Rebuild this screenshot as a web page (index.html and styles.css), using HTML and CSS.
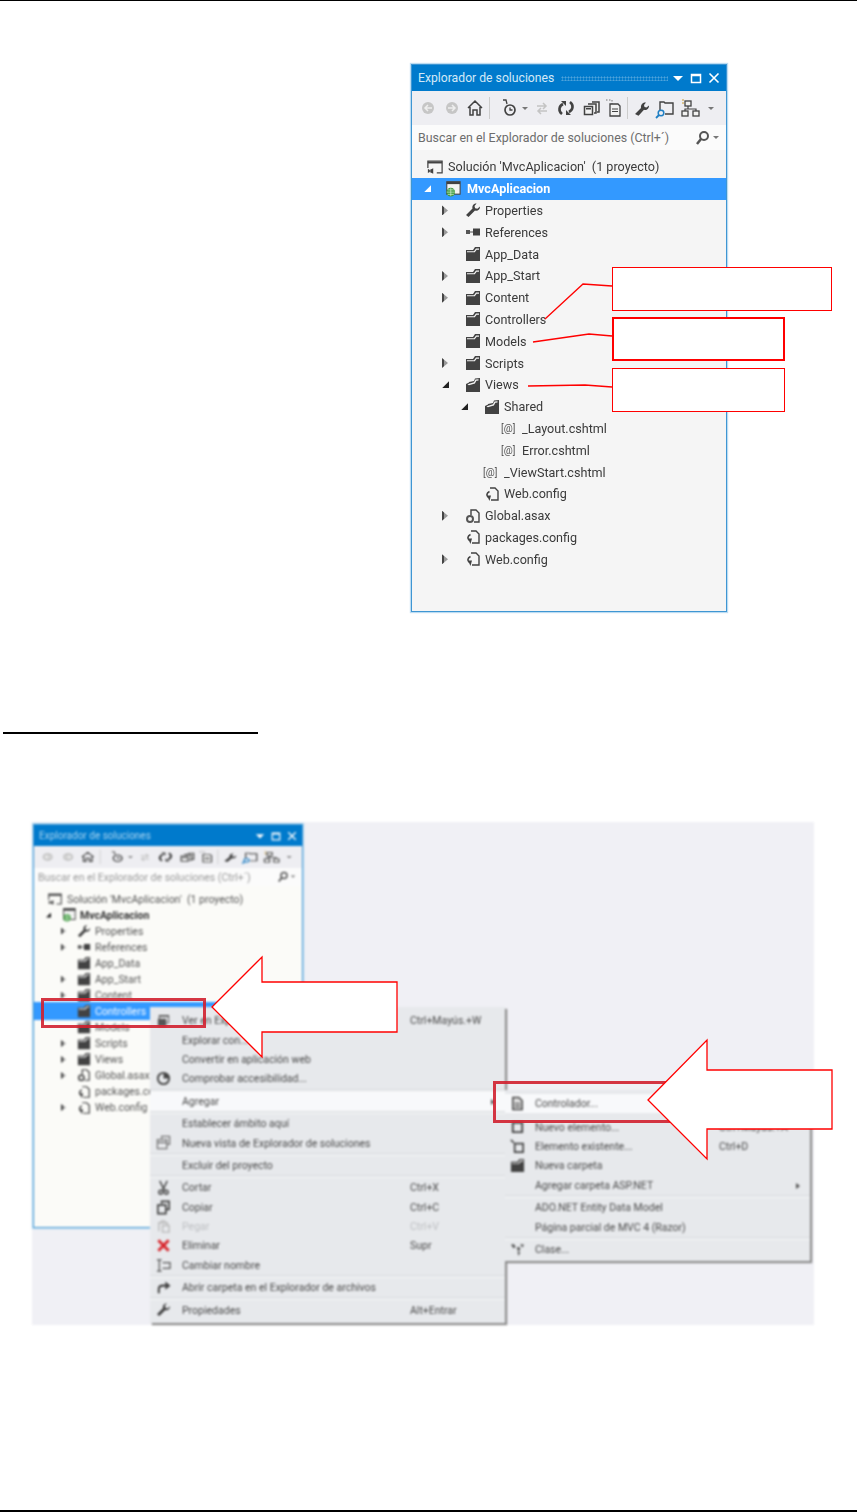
FILE: index.html
```html
<!DOCTYPE html>
<html lang="es">
<head>
  <meta charset="UTF-8" />
  <title>Explorador de soluciones</title>
  <link rel="stylesheet" href="styles.css">
</head>
<body>

  <svg class="defs" width="0" height="0">
    <symbol id="i-folder" viewBox="0 0 16 16">
      <path fill="#424242" d="M1 4h7l2-3h5v14H1z"/>
      <path fill="#f4f4f4" d="M2 5.2h7l2-2.7h3v1.200h-2.400l-1.800 2.500H2z"/>
    </symbol>
    <symbol id="i-folder-open" viewBox="0 0 16 16">
      <path fill="#424242" d="M1 15V7l3-1.500V5l5-1 1-2.500 5-.5v14z"/>
      <path fill="#f4f4f4" d="M2.500 7.300l6.500-2 1.500-2.800 3-.3v1.200l-2.200.3-1.400 2.800-6 1.700z"/>
    </symbol>
    <symbol id="i-wrench" viewBox="0 0 16 16">
      <path fill="#424242" d="M1 13l6.500-6.500C6.800 4 8.500 1.200 11.600 1.500L9.500 4l.6 2.200 2.300.6L15 4.500c.3 3-2.500 4.900-5 4L3.500 15z"/>
    </symbol>
    <symbol id="i-refs" viewBox="0 0 16 16">
      <rect x="1" y="6" width="4" height="4" fill="#555"/>
      <rect x="5" y="7.500" width="3" height="1" fill="#555"/>
      <rect x="8" y="4.500" width="7" height="7" fill="#424242"/>
    </symbol>
    <symbol id="i-config" viewBox="0 0 16 16">
      <path fill="none" stroke="#424242" stroke-width="1.400" d="M6 2h5l3 3v9H7"/>
      <path fill="none" stroke="#424242" stroke-width="1.600" d="M5.500 5.500C2.500 7 2 10 4.500 11.500"/>
      <path fill="#424242" d="M3 9.500h4L5.500 15z"/>
    </symbol>
    <symbol id="i-global" viewBox="0 0 16 16">
      <path fill="none" stroke="#424242" stroke-width="1.400" d="M6 7V2h5l3 3v9H9"/>
      <circle cx="5" cy="11" r="3" fill="none" stroke="#555" stroke-width="2"/>
    </symbol>
    <symbol id="i-solution" viewBox="0 0 18 16">
      <path fill="none" stroke="#424242" stroke-width="1.400" d="M1 9V1.500h16v13h-6"/>
      <rect x="1" y="2" width="16" height="2" fill="#424242"/>
      <path fill="#424242" d="M1 10l2 1.500L7 9.500v6l-4-2-2 1.300zM3 12v1.200l1.800-.6z"/>
    </symbol>
    <symbol id="i-project" viewBox="0 0 18 18">
      <rect x="2" y=".8" width="15" height="14" fill="#f4f4f4" stroke="#424242" stroke-width="1.200"/>
      <rect x="2" y="1" width="15" height="2.500" fill="#424242"/>
      <circle cx="6.500" cy="12.500" r="4.800" fill="#3d9a3d"/>
      <path fill="none" stroke="#d6efd6" stroke-width=".8" d="M2 12.500h9M6.500 8v9M3 10h7M3 15h7"/>
    </symbol>
    <symbol id="i-explorer" viewBox="0 0 16 16">
      <path fill="#555" d="M3 2h11v9h-3v3H2V6h1zM4 6h7v4h2V4H4z"/>
    </symbol>
    <symbol id="i-pie" viewBox="0 0 16 16">
      <circle cx="8" cy="8" r="6" fill="none" stroke="#444" stroke-width="2"/>
      <path fill="#444" d="M8 8V2a6 6 0 0 1 6 6z"/>
    </symbol>
    <symbol id="i-stack" viewBox="0 0 16 16">
      <path fill="none" stroke="#777" stroke-width="1.400" d="M6 4V1.500h8.500V10H12M1.500 5h10v9.500h-10zM1.500 8h10"/>
    </symbol>
    <symbol id="i-cut" viewBox="0 0 16 16">
      <path fill="none" stroke="#444" stroke-width="1.500" d="M4 1l5 10M12 1L7 11"/>
      <circle cx="5" cy="13" r="2" fill="none" stroke="#444" stroke-width="1.500"/>
      <circle cx="11" cy="13" r="2" fill="none" stroke="#444" stroke-width="1.500"/>
    </symbol>
    <symbol id="i-copy" viewBox="0 0 16 16">
      <path fill="none" stroke="#444" stroke-width="1.800" d="M6 4V1.500h8V10h-3M2 5.500h8.500v9H2z"/>
    </symbol>
    <symbol id="i-paste" viewBox="0 0 16 16">
      <path fill="none" stroke="#bbb" stroke-width="1.500" d="M3 13V4h9v2M7 7h7v7H7zM5 4l1-2h3l1 2"/>
    </symbol>
    <symbol id="i-delete" viewBox="0 0 16 16">
      <path fill="none" stroke="#d8262c" stroke-width="3" d="M2.500 2.500l11 11M13.500 2.500l-11 11"/>
    </symbol>
    <symbol id="i-rename" viewBox="0 0 16 16">
      <path fill="none" stroke="#555" stroke-width="1.300" d="M1 2h2.500M1 14h2.500M6 2H3.500v12H6M7 5h8v6H7"/>
    </symbol>
    <symbol id="i-redo" viewBox="0 0 16 16">
      <path fill="none" stroke="#444" stroke-width="2.200" d="M3 14V9.500C3 7 5 6 7.500 6H11"/>
      <path fill="#444" d="M10 1.500L15.500 6 10 10.500z"/>
    </symbol>
    <symbol id="i-file" viewBox="0 0 16 16">
      <path fill="#ddd" stroke="#444" stroke-width="1.600" d="M3 1.500h6.500l3.500 3.500v9.500H3z"/>
      <path stroke="#444" stroke-width="1.200" d="M5 8h6M5 11h6"/>
    </symbol>
    <symbol id="i-new" viewBox="0 0 16 16">
      <path fill="none" stroke="#444" stroke-width="2" d="M3 4h10v10H3z"/>
    </symbol>
    <symbol id="i-existing" viewBox="0 0 16 16">
      <path fill="none" stroke="#444" stroke-width="1.800" d="M5 5h9v9H5zM1 1l3 3"/>
    </symbol>
    <symbol id="i-class" viewBox="0 0 16 16">
      <path fill="#555" d="M1 3l3-1 2 3-2 2zM7 6l3-1 1 3-2 2zM11 2l4 1-2 3zM8 10l3 1-2 4z"/>
    </symbol>
    <symbol id="i-toolbar" viewBox="0 0 314 34" preserveAspectRatio="none">
      <circle cx="16" cy="17" r="6" fill="#c6c6c6"/>
      <path stroke="#eee" stroke-width="1.500" fill="none" d="M20 17h-7M16 14l-3 3 3 3"/>
      <circle cx="40" cy="17" r="6" fill="#c6c6c6"/>
      <path stroke="#eee" stroke-width="1.500" fill="none" d="M36 17h7M40 14l3 3-3 3"/>
      <path fill="none" stroke="#424242" stroke-width="1.500" d="M56 17l7-7 7 7M58 16v8h3v-5h4v5h3v-8"/>
      <rect x="77" y="6" width="1" height="22" fill="#ccc"/>
      <circle cx="98" cy="19" r="5" fill="none" stroke="#424242" stroke-width="1.700"/>
      <path fill="none" stroke="#424242" stroke-width="1.300" d="M98 16.500V19h2.500M91 9h3l1 4"/>
      <path fill="#777" d="M110 16h6l-3 3z"/>
      <path fill="none" stroke="#c4c4c4" stroke-width="1.500" d="M125 15h9M131 12l3 3-3 3M135 20h-9M129 17l-3 3 3 3"/>
      <path fill="none" stroke="#424242" stroke-width="2.600" d="M150 23c-4-3-3-8 1-10M158 11c4 3 3 8-1 10"/>
      <path fill="#424242" d="M149 10h5v5zM159 24h-5v-5z"/>
      <path fill="#f2f2f2" stroke="#424242" stroke-width="1.500" d="M180 11h7v10h-2"/>
      <path fill="#f2f2f2" stroke="#424242" stroke-width="1.500" d="M176 13h8v9h-2"/>
      <rect x="172.500" y="15.500" width="8" height="8" fill="#f2f2f2" stroke="#424242" stroke-width="1.500"/>
      <rect x="174" y="17" width="5" height="1.500" fill="#424242"/>
      <path fill="none" stroke="#777" stroke-width="1" stroke-dasharray="1.500 1.500" d="M194 9h6v5"/>
      <path fill="#f2f2f2" stroke="#424242" stroke-width="1.300" d="M198 13h8l2 2v10h-10z"/>
      <path stroke="#424242" d="M200 18h6M200 20.500h6"/>
      <rect x="215" y="6" width="1" height="22" fill="#ccc"/>
      <path fill="#424242" d="M223 23l6-6c-.5-3 1.500-6 5-5.500l-2 2.500.5 2 2 .5 2.500-2c.3 3-2.500 5.200-5 4.300l-5.500 6z"/>
      <path fill="none" stroke="#424242" stroke-width="1.400" d="M248 19v-8h4l1 1h8v11h-8"/>
      <circle cx="249" cy="22" r="2.800" fill="none" stroke="#1f7fc4" stroke-width="1.500"/>
      <path stroke="#1f7fc4" stroke-width="1.800" d="M247 24l-3 3"/>
      <rect x="273" y="10" width="6" height="5" fill="#f2f2f2" stroke="#424242" stroke-width="1.300"/>
      <rect x="270" y="20" width="6" height="5" fill="#f2f2f2" stroke="#424242" stroke-width="1.300"/>
      <rect x="281" y="20" width="6" height="5" fill="#f2f2f2" stroke="#424242" stroke-width="1.300"/>
      <path fill="none" stroke="#424242" stroke-width="1.200" d="M276 15v3h-3v2M276 18h8v2"/>
      <path fill="#c99a2e" d="M270 9l1 1 1-1-1-1zM270 12l1 1 1-1-1-1z"/>
      <path fill="#777" d="M296 16h6l-3 3z"/>
    </symbol>
  </svg>

  <div class="page">

    <div class="figTree">
      <div class="panel">
        <div class="titleBar">
          <span class="titleText">Explorador de soluciones</span>
          <span class="grip"></span>
          <span class="winBtns">
            <svg width="12" height="12" viewBox="0 0 12 12"><path fill="#fff" d="M1 4h10L6 9z"/></svg>
            <svg width="12" height="12" viewBox="0 0 12 12"><path fill="none" stroke="#fff" stroke-width="1.500" d="M1.500 2.500h9v8h-9zM1.500 3.500h9"/></svg>
            <svg width="12" height="12" viewBox="0 0 12 12"><path fill="none" stroke="#fff" stroke-width="1.600" d="M1.500 1.500l9 9M10.500 1.500l-9 9"/></svg>
          </span>
        </div>
        <svg class="toolbar"><use href="#i-toolbar"/></svg>
        <div class="search">
          <span class="searchText">Buscar en el Explorador de soluciones (Ctrl+´)</span>
          <svg class="searchIcon" viewBox="0 0 26 16"><circle cx="9" cy="6" r="4" fill="none" stroke="#555" stroke-width="2"/><path stroke="#555" stroke-width="2.500" d="M6 9l-4 5"/><path fill="#777" d="M18 6h6l-3 3z"/></svg>
        </div>
        <div class="tree">
          <div class="row lvl0"><svg class="ic"><use href="#i-solution"/></svg><span>Solución 'MvcAplicacion'  (1 proyecto)</span></div>
          <div class="row lvl0 selected"><i class="tw open"></i><svg class="ic"><use href="#i-project"/></svg><span>MvcAplicacion</span></div>
          <div class="row lvl1"><i class="tw"></i><svg class="ic"><use href="#i-wrench"/></svg><span>Properties</span></div>
          <div class="row lvl1"><i class="tw"></i><svg class="ic"><use href="#i-refs"/></svg><span>References</span></div>
          <div class="row lvl1"><i class="tw none"></i><svg class="ic"><use href="#i-folder"/></svg><span>App_Data</span></div>
          <div class="row lvl1"><i class="tw"></i><svg class="ic"><use href="#i-folder"/></svg><span>App_Start</span></div>
          <div class="row lvl1"><i class="tw"></i><svg class="ic"><use href="#i-folder"/></svg><span>Content</span></div>
          <div class="row lvl1"><i class="tw none"></i><svg class="ic"><use href="#i-folder"/></svg><span>Controllers</span></div>
          <div class="row lvl1"><i class="tw none"></i><svg class="ic"><use href="#i-folder"/></svg><span>Models</span></div>
          <div class="row lvl1"><i class="tw"></i><svg class="ic"><use href="#i-folder"/></svg><span>Scripts</span></div>
          <div class="row lvl1"><i class="tw open"></i><svg class="ic"><use href="#i-folder-open"/></svg><span>Views</span></div>
          <div class="row lvl2"><i class="tw open"></i><svg class="ic"><use href="#i-folder-open"/></svg><span>Shared</span></div>
          <div class="row lvl3"><i class="tw none"></i><b class="razor">[@]</b><span>_Layout.cshtml</span></div>
          <div class="row lvl3"><i class="tw none"></i><b class="razor">[@]</b><span>Error.cshtml</span></div>
          <div class="row lvl2"><i class="tw none"></i><b class="razor">[@]</b><span>_ViewStart.cshtml</span></div>
          <div class="row lvl2"><i class="tw none"></i><svg class="ic"><use href="#i-config"/></svg><span>Web.config</span></div>
          <div class="row lvl1"><i class="tw"></i><svg class="ic"><use href="#i-global"/></svg><span>Global.asax</span></div>
          <div class="row lvl1"><i class="tw none"></i><svg class="ic"><use href="#i-config"/></svg><span>packages.config</span></div>
          <div class="row lvl1"><i class="tw"></i><svg class="ic"><use href="#i-config"/></svg><span>Web.config</span></div>
        </div>
      </div>

      <div class="note noteA"></div>
      <div class="note noteB"></div>
      <div class="note noteC"></div>
      <svg class="leaders" viewBox="0 0 446 548">
        <path d="M134 255L172 220L201 222"/>
        <path d="M122 278L178 270L201 272"/>
        <path d="M117 322L174 321L201 323"/>
      </svg>
    </div>

    <div class="headingRule"></div>

    <div class="shot">
      <div class="shotInner">
        <div class="panel small">
          <div class="titleBar">
            <span class="titleText">Explorador de soluciones</span>
            <span class="winBtns">
              <svg width="10" height="10" viewBox="0 0 12 12"><path fill="#fff" d="M1 4h10L6 9z"/></svg>
              <svg width="10" height="10" viewBox="0 0 12 12"><path fill="none" stroke="#fff" stroke-width="1.500" d="M1.500 2.500h9v8h-9zM1.500 3.500h9"/></svg>
              <svg width="10" height="10" viewBox="0 0 12 12"><path fill="none" stroke="#fff" stroke-width="1.600" d="M1.500 1.500l9 9M10.500 1.500l-9 9"/></svg>
            </span>
          </div>
          <svg class="toolbar"><use href="#i-toolbar"/></svg>
          <div class="search">
            <span class="searchText">Buscar en el Explorador de soluciones (Ctrl+´)</span>
            <svg class="searchIcon" viewBox="0 0 26 16"><circle cx="9" cy="6" r="4" fill="none" stroke="#555" stroke-width="2"/><path stroke="#555" stroke-width="2.500" d="M6 9l-4 5"/><path fill="#777" d="M18 6h6l-3 3z"/></svg>
          </div>
          <div class="tree">
            <div class="row lvl0"><svg class="ic"><use href="#i-solution"/></svg><span>Solución 'MvcAplicacion'  (1 proyecto)</span></div>
            <div class="row lvl0 strong"><i class="tw open"></i><svg class="ic"><use href="#i-project"/></svg><span>MvcAplicacion</span></div>
            <div class="row lvl1"><i class="tw"></i><svg class="ic"><use href="#i-wrench"/></svg><span>Properties</span></div>
            <div class="row lvl1"><i class="tw"></i><svg class="ic"><use href="#i-refs"/></svg><span>References</span></div>
            <div class="row lvl1"><i class="tw none"></i><svg class="ic"><use href="#i-folder"/></svg><span>App_Data</span></div>
            <div class="row lvl1"><i class="tw"></i><svg class="ic"><use href="#i-folder"/></svg><span>App_Start</span></div>
            <div class="row lvl1"><i class="tw"></i><svg class="ic"><use href="#i-folder"/></svg><span>Content</span></div>
            <div class="row lvl1 selected plain"><i class="tw none"></i><svg class="ic"><use href="#i-folder"/></svg><span>Controllers</span></div>
            <div class="row lvl1"><i class="tw none"></i><svg class="ic"><use href="#i-folder"/></svg><span>Models</span></div>
            <div class="row lvl1"><i class="tw"></i><svg class="ic"><use href="#i-folder"/></svg><span>Scripts</span></div>
            <div class="row lvl1"><i class="tw"></i><svg class="ic"><use href="#i-folder"/></svg><span>Views</span></div>
            <div class="row lvl1"><i class="tw"></i><svg class="ic"><use href="#i-global"/></svg><span>Global.asax</span></div>
            <div class="row lvl1"><i class="tw none"></i><svg class="ic"><use href="#i-config"/></svg><span>packages.config</span></div>
            <div class="row lvl1"><i class="tw"></i><svg class="ic"><use href="#i-config"/></svg><span>Web.config</span></div>
          </div>
        </div>

        <div class="menu mainMenu">
          <div class="mi"><svg class="mic"><use href="#i-explorer"/></svg><span class="ml">Ver en Explorador de objetos</span><span>Ctrl+Mayús.+W</span></div>
          <div class="mi"><span class="ml">Explorar con...</span></div>
          <div class="mi"><span class="ml">Convertir en aplicación web</span></div>
          <div class="mi"><svg class="mic"><use href="#i-pie"/></svg><span class="ml">Comprobar accesibilidad...</span></div>
          <div class="sep"></div>
          <div class="mi hot"><span class="ml">Agregar</span><i class="more"></i></div>
          <div class="sep"></div>
          <div class="mi"><span class="ml">Establecer ámbito aquí</span></div>
          <div class="mi"><svg class="mic"><use href="#i-stack"/></svg><span class="ml">Nueva vista de Explorador de soluciones</span></div>
          <div class="sep"></div>
          <div class="mi"><span class="ml">Excluir del proyecto</span></div>
          <div class="sep"></div>
          <div class="mi"><svg class="mic"><use href="#i-cut"/></svg><span class="ml">Cortar</span><span>Ctrl+X</span></div>
          <div class="mi"><svg class="mic"><use href="#i-copy"/></svg><span class="ml">Copiar</span><span>Ctrl+C</span></div>
          <div class="mi off"><svg class="mic"><use href="#i-paste"/></svg><span class="ml">Pegar</span><span>Ctrl+V</span></div>
          <div class="mi"><svg class="mic"><use href="#i-delete"/></svg><span class="ml">Eliminar</span><span>Supr</span></div>
          <div class="mi"><svg class="mic"><use href="#i-rename"/></svg><span class="ml">Cambiar nombre</span></div>
          <div class="sep"></div>
          <div class="mi"><svg class="mic"><use href="#i-redo"/></svg><span class="ml">Abrir carpeta en el Explorador de archivos</span></div>
          <div class="sep"></div>
          <div class="mi"><svg class="mic"><use href="#i-wrench"/></svg><span class="ml">Propiedades</span><span>Alt+Entrar</span></div>
        </div>

        <div class="menu subMenu">
          <div class="mi hot"><svg class="mic"><use href="#i-file"/></svg><span class="ml">Controlador...</span></div>
          <div class="gap"></div>
          <div class="mi"><svg class="mic"><use href="#i-new"/></svg><span class="ml">Nuevo elemento...</span><span>Ctrl+Mayús.+A</span></div>
          <div class="mi"><svg class="mic"><use href="#i-existing"/></svg><span class="ml">Elemento existente...</span><span>Ctrl+D</span></div>
          <div class="mi"><svg class="mic"><use href="#i-folder"/></svg><span class="ml">Nueva carpeta</span></div>
          <div class="mi"><span class="ml">Agregar carpeta ASP.NET</span><i class="more"></i></div>
          <div class="sep"></div>
          <div class="mi"><span class="ml">ADO.NET Entity Data Model</span></div>
          <div class="mi"><span class="ml">Página parcial de MVC 4 (Razor)</span></div>
          <div class="sep"></div>
          <div class="mi"><svg class="mic"><use href="#i-class"/></svg><span class="ml">Clase...</span></div>
        </div>
      </div>

      <div class="mark markA"></div>
      <div class="mark markB"></div>
      <svg class="arrows" viewBox="0 0 782 503">
        <path d="M180 185L230 135V160H365V210H230V235Z"/>
        <path d="M616 278L675 218V248H800V307H675V337Z"/>
      </svg>
    </div>

    <div class="footRule"></div>
  </div>

</body>
</html>
```

FILE: styles.css
```css
* {
  box-sizing: border-box;
}

body {
  margin: 0;
  background-color: #fff;
  font-family: 'Roboto', 'Open Sans', sans-serif;
  color: #333;
}

.defs {
  position: absolute;
}

.page {
  width: 857px;
  height: 1512px;
  display: flex;
  flex-direction: column;
  border-top: 1px solid #000;
  overflow: hidden;
}

/* primera figura */

.figTree {
  position: relative;
  width: 446px;
  height: 548px;
  margin: 63px 0 0 411px;
}

.panel {
  width: 316px;
  height: 548px;
  display: flex;
  flex-direction: column;
  background-color: #f5f5f5;
  border: 1px solid #3f96d3;
  box-shadow: 0 0 1px 1px #bcdcf2;
  filter: blur(.35px);
}

.titleBar {
  height: 26px;
  flex: none;
  display: flex;
  align-items: center;
  padding: 0 6px;
  background-color: #007acc;
  color: #d3e9f8;
  font-size: 12.2px;
}

.grip {
  flex: 1;
  height: 5px;
  margin: 0 4px 0 7px;
  background-image: radial-gradient(#4ea3db 45%, transparent 50%);
  background-size: 3px 3px;
}

.winBtns {
  display: flex;
  gap: 6px;
  margin-left: auto;
}

.toolbar {
  display: block;
  width: 100%;
  height: 34px;
  flex: none;
  background-color: #eeeef2;
}

.search {
  height: 25px;
  flex: none;
  display: flex;
  align-items: center;
  justify-content: space-between;
  padding: 0 5px 0 6px;
  background-color: #fbfbfb;
  color: #6d6d6d;
  font-size: 12.4px;
}

.searchIcon {
  width: 26px;
  height: 16px;
}

.tree {
  padding-top: 6px;
  color: #3a3a3a;
  font-size: 12.6px;
}

.row {
  height: 21.8px;
  display: flex;
  align-items: center;
  white-space: pre;
}

.lvl0 { padding-left: 12px; }
.lvl1 { padding-left: 30px; }
.lvl2 { padding-left: 49px; }
.lvl3 { padding-left: 67px; }

/* triangulo del arbol: cerrado por defecto */
.tw {
  width: 23px;
  height: 10px;
  flex: none;
  display: block;
  background: linear-gradient(to right, #444 2px, #9a9a9a 2px);
  clip-path: polygon(0 0, 6px 50%, 0 100%);
}

.tw.open {
  height: 7px;
  background: #222;
  clip-path: polygon(7px 0, 7px 100%, 0 100%);
}

.tw.none {
  background: none;
}

.ic {
  width: 16px;
  height: 16px;
  flex: none;
  margin-right: 4px;
}

.lvl0 .tw {
  width: 21px;
}

.lvl0 .ic {
  margin-right: 6px;
}

.row > .ic:first-child {
  margin-left: 3px;
  margin-right: 5px;
}

.razor {
  width: 20px;
  flex: none;
  color: #555;
  font-size: 10px;
  font-weight: 400;
  margin-left: -1px;
  margin-right: 1px;
}

.selected {
  background-color: #3399ff;
  color: #fff;
  font-weight: bold;
}

.selected .tw.open {
  background: #fff;
}

.note {
  position: absolute;
  left: 201px;
  background-color: #fff;
  border: 1.500px solid #f00;
}

.noteA {
  top: 203px;
  width: 220px;
  height: 44px;
}

.noteB {
  top: 253px;
  width: 173px;
  height: 44px;
  border-width: 2px;
}

.noteC {
  top: 304px;
  width: 173px;
  height: 44px;
}

.leaders {
  position: absolute;
  left: 0;
  top: 0;
  width: 446px;
  height: 548px;
  pointer-events: none;
}

.leaders path {
  fill: none;
  stroke: #f00;
  stroke-width: 1.300;
}

.headingRule {
  width: 255px;
  height: 2px;
  flex: none;
  margin: 120px 0 0 3px;
  background-color: #000;
}

/* segunda figura, captura borrosa */

.shot {
  position: relative;
  width: 782px;
  height: 503px;
  flex: none;
  margin: 88px 0 0 32px;
}

.shotInner {
  position: relative;
  width: 100%;
  height: 100%;
  padding: 2px 0 0 1px;
  background-color: #f0f0f5;
  filter: blur(.8px);
}

.panel.small {
  width: 270px;
  height: 404px;
  background-color: #fbfbf8;
  filter: none;
}

.small .titleBar {
  height: 21px;
  padding: 0 5px;
  font-size: 10px;
  color: #a9d5f1;
}

.small .toolbar {
  height: 22px;
}

.small .search {
  height: 18px;
  padding: 0 4px;
  font-size: 10.5px;
  color: #999;
}

.small .searchIcon {
  width: 22px;
  height: 12px;
}

.small .tree {
  padding-top: 5px;
  font-size: 10.5px;
  color: #555;
}

.small .row {
  height: 16.05px;
}

.small .lvl0 { padding-left: 12px; }
.small .lvl1 { padding-left: 27px; }

.small .tw {
  width: 16px;
  height: 7px;
  clip-path: polygon(0 0, 5px 50%, 0 100%);
}

.small .tw.open {
  height: 5px;
  clip-path: polygon(5px 0, 5px 100%, 0 100%);
}

.small .ic {
  width: 14px;
  height: 14px;
  margin-right: 4px;
}

.small .row > .ic:first-child {
  margin-left: 2px;
}

.small .strong {
  font-weight: bold;
  color: #333;
}

.small .selected {
  height: 18px;
  margin: -1px 0;
}

.small .plain {
  font-weight: 400;
}

.menu {
  position: absolute;
  display: flex;
  flex-direction: column;
  background-color: #e7e9ec;
  color: #4a4a4a;
  font-size: 10.5px;
  box-shadow: 2px 2px 1px #8c8c8c;
}

.mainMenu {
  left: 118px;
  top: 185px;
  width: 355px;
  height: 316px;
  padding-top: 4px;
}

.subMenu {
  left: 473px;
  top: 268px;
  width: 305px;
  height: 171px;
  padding-top: 4px;
}

.mi {
  height: 19.4px;
  flex: none;
  display: flex;
  align-items: center;
  padding-left: 32px;
  position: relative;
}

.subMenu .mi {
  padding-left: 30px;
}

.ml {
  flex: 0 0 228px;
}

.subMenu .ml {
  flex-basis: 184px;
}

.mic {
  position: absolute;
  left: 6px;
  top: 2px;
  width: 15px;
  height: 15px;
}

.subMenu .mic {
  left: 5px;
}

.sep {
  height: 3px;
  flex: none;
  border-bottom: 1px solid #f4f5f6;
  background-color: #dcdee1;
  background-clip: content-box;
  padding-bottom: 1px;
}

.gap {
  height: 4px;
  flex: none;
}

.hot {
  background-color: #f8f9fb;
}

.off {
  color: #bdbfc2;
}

.more {
  position: absolute;
  right: 10px;
  top: 7px;
  border-left: 4px solid #555;
  border-top: 3px solid transparent;
  border-bottom: 3px solid transparent;
}

.mark {
  position: absolute;
  border: 3px solid #d0202f;
  opacity: .9;
}

.markA {
  left: 9px;
  top: 176px;
  width: 165px;
  height: 30px;
}

.markB {
  left: 461px;
  top: 259px;
  width: 220px;
  height: 42px;
}

.arrows {
  position: absolute;
  left: 0;
  top: 0;
  width: 782px;
  height: 503px;
  overflow: visible;
  pointer-events: none;
}

.arrows path {
  fill: #fff;
  stroke: #f00;
  stroke-width: 1.300;
}

.footRule {
  height: 2px;
  flex: none;
  margin-top: auto;
  background-color: #000;
}
```
